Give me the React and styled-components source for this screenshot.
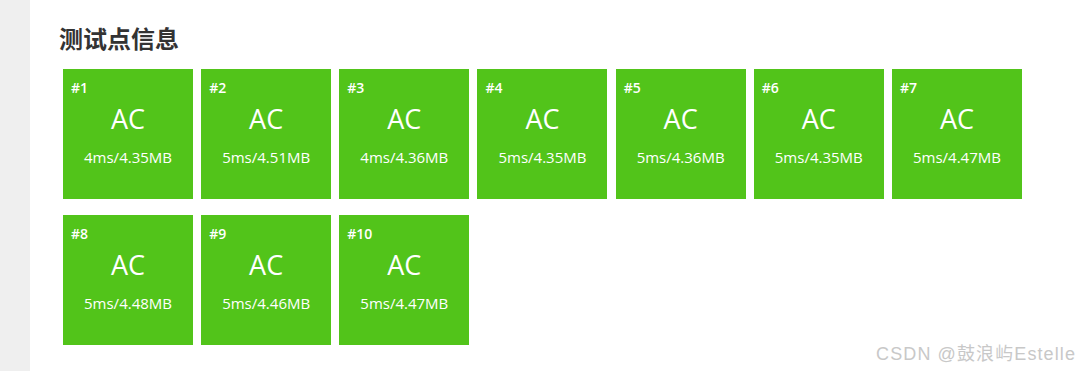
import styled, { createGlobalStyle } from 'styled-components';

const GlobalStyle = createGlobalStyle`
  html, body {
    margin: 0;
    padding: 0;
    background: #fff;
    font-family: "Open Sans", "Noto Sans CJK SC", sans-serif;
  }
`;

const cases = [
  { id: 1, time: 4, mem: '4.35' },
  { id: 2, time: 5, mem: '4.51' },
  { id: 3, time: 4, mem: '4.36' },
  { id: 4, time: 5, mem: '4.35' },
  { id: 5, time: 5, mem: '4.36' },
  { id: 6, time: 5, mem: '4.35' },
  { id: 7, time: 5, mem: '4.47' },
  { id: 8, time: 5, mem: '4.48' },
  { id: 9, time: 5, mem: '4.46' },
  { id: 10, time: 5, mem: '4.47' },
];

const Page = styled.div`
  position: relative;
  display: flex;
  width: 1081px;
  height: 371px;
  overflow: hidden;
`;

const Sidebar = styled.div`
  width: 30px;
  flex-shrink: 0;
  background: #efefef;
`;

const Main = styled.div`
  flex: 1;
  padding: 22px 0 0 29px;
`;

const Title = styled.h3`
  margin: 0 0 16px 0;
  font-family: "Noto Sans CJK SC", sans-serif;
  font-size: 24px;
  line-height: 31px;
  font-weight: 700;
  color: #333;
`;

const Grid = styled.div`
  display: flex;
  flex-wrap: wrap;
  width: 970px;
  padding-left: 4px;
  column-gap: 8.17px;
  row-gap: 16px;
`;

const Box = styled.div`
  width: 130px;
  height: 130px;
  box-sizing: border-box;
  padding: 10px 8px;
  background: ${(p) => (p.$status === 'AC' ? '#52c41a' : '#e74c3c')};
  color: #fff;
  display: flex;
  flex-direction: column;
`;

const CaseNo = styled.div`
  font-size: 14px;
  line-height: 18px;
  font-weight: 600;
`;

const Status = styled.div`
  margin-top: 7px;
  text-align: center;
  font-size: 27px;
  line-height: 30px;
  font-weight: 400;
`;

const Usage = styled.div`
  margin-top: 14px;
  text-align: center;
  font-size: 15px;
  line-height: 18px;
  font-weight: 500;
`;

const Watermark = styled.div`
  position: absolute;
  right: 5px;
  bottom: 6px;
  font-family: "Liberation Sans", "Noto Sans CJK SC", sans-serif;
  font-size: 18px;
  letter-spacing: 1.1px;
  color: #c8c8c8;
`;

export default function App() {
  return (
    <>
      <GlobalStyle />
      <Page>
        <Sidebar />
        <Main>
          <Title>测试点信息</Title>
          <Grid>
            {cases.map((c) => (
              <Box key={c.id} $status="AC">
                <CaseNo>#{c.id}</CaseNo>
                <Status>AC</Status>
                <Usage>
                  {c.time}ms/{c.mem}MB
                </Usage>
              </Box>
            ))}
          </Grid>
        </Main>
        <Watermark>CSDN @鼓浪屿Estelle</Watermark>
      </Page>
    </>
  );
}
